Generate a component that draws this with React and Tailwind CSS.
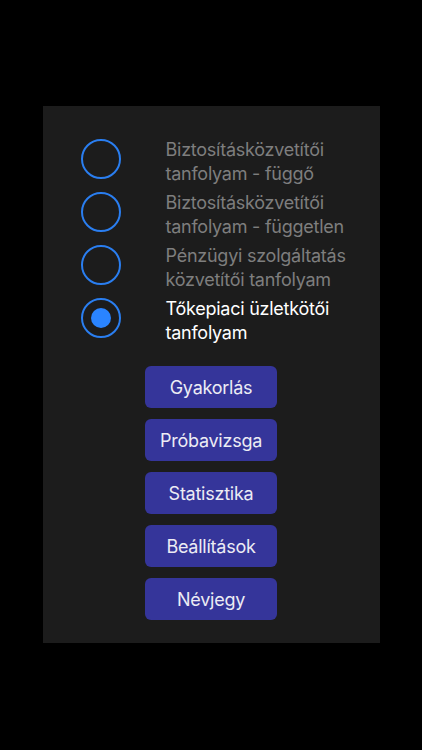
const courses = [
  { label: "Biztosításközvetítői tanfolyam - függő", selected: false },
  { label: "Biztosításközvetítői tanfolyam - független", selected: false },
  { label: "Pénzügyi szolgáltatás közvetítői tanfolyam", selected: false },
  { label: "Tőkepiaci üzletkötői tanfolyam", selected: true },
];

const menu = ["Gyakorlás", "Próbavizsga", "Statisztika", "Beállítások", "Névjegy"];

const Radio = ({ selected }) => (
  <div className="w-10 h-10 shrink-0 rounded-full border-2 border-[#2a7ef0] flex items-center justify-center">
    {selected && <div className="w-5 h-5 rounded-full bg-[#2a84ff]" />}
  </div>
);

export default function App() {
  return (
    <div
      className="w-[422px] h-[750px] bg-black pt-[106px] tracking-[-0.25px]"
      style={{ fontFamily: "Inter, 'Liberation Sans', sans-serif" }}
    >
      <div className="mx-auto w-[337px] bg-[#1c1c1c] pt-[26px] pb-[23px]">
        {/* Course selection */}
        <div className="flex flex-col pl-[38px] pr-4">
          {courses.map((c) => (
            <div key={c.label} className="h-[53px] flex items-center gap-[45px]">
              <Radio selected={c.selected} />
              <p
                className={`pt-[6px] text-[18px] leading-[24px] ${
                  c.selected ? "text-white" : "text-[#7e7e7e]"
                }`}
              >
                {c.label}
              </p>
            </div>
          ))}
        </div>

        {/* Menu buttons */}
        <div className="mt-[22px] flex flex-col items-center gap-[11px]">
          {menu.map((m) => (
            <button
              key={m}
              className="w-[132px] h-[42px] rounded-md bg-[#35359a] text-[#ececf4] text-[18px]"
            >
              {m}
            </button>
          ))}
        </div>
      </div>
    </div>
  );
}
